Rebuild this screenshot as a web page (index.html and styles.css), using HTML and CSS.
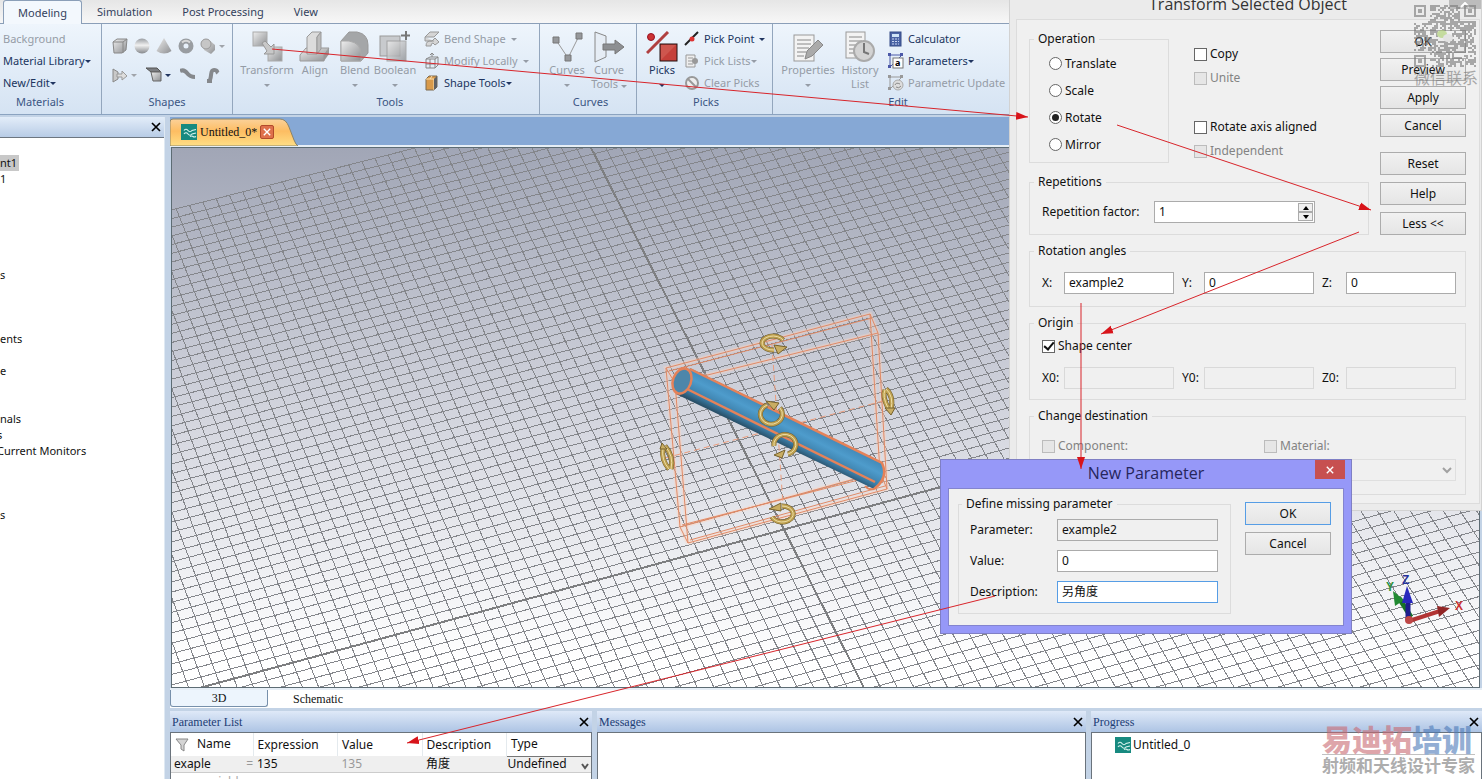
FILE: index.html
```
<!DOCTYPE html>
<html lang="en">
<head>
    <meta charset="UTF-8">
    <meta name="viewport" content="width=device-width, initial-scale=1.0">
    <title>Untitled_0 - Modeling</title>
    <link rel="stylesheet" href="styles.css">
</head>
<body>
    <!-- Shared gradients -->
    <svg class="defs" width="0" height="0">
        <defs>
            <linearGradient id="grey" x1="0" y1="0" x2="1" y2="1">
                <stop offset="0" stop-color="#eeeeee"/><stop offset="1" stop-color="#8d8f92"/>
            </linearGradient>
            <linearGradient id="ball" x1="0" y1="0" x2="0" y2="1">
                <stop offset="0" stop-color="#9a9ea3"/><stop offset="0.45" stop-color="#f0f0f0"/><stop offset="1" stop-color="#85888c"/>
            </linearGradient>
            <linearGradient id="tube" gradientUnits="userSpaceOnUse" x1="784" y1="414" x2="771" y2="440">
                <stop offset="0" stop-color="#4289b8"/><stop offset="0.35" stop-color="#4e9ccc"/><stop offset="0.75" stop-color="#3c7faa"/><stop offset="1" stop-color="#2a5068"/>
            </linearGradient>
            <symbol id="logo" viewBox="0 0 16 16">
                <rect width="16" height="16" fill="#178a80"/>
                <path d="M3 6.500q2-2.500 4 0t4 0l4-1M3 10q2-2.500 4 0t4 0l4-1M9 12.500q2-1 3 0t3 0" fill="none" stroke="#d8f4ee" stroke-width="1.200"/>
            </symbol>
            <symbol id="cross" viewBox="0 0 10 10">
                <path d="M1 1l8 8M9 1L1 9" stroke="currentColor" stroke-width="1.700"/>
            </symbol>
        </defs>
    </svg>

    <nav class="tabs">
        <button class="tab active">Modeling</button>
        <button class="tab">Simulation</button>
        <button class="tab">Post Processing</button>
        <button class="tab">View</button>
    </nav>

    <header class="ribbon">
        <section class="group materials">
            <div class="rows">
                <button class="item" disabled>Background</button>
                <button class="item">Material Library<i class="drop"></i></button>
                <button class="item">New/Edit<i class="drop"></i></button>
            </div>
            <h2>Materials</h2>
        </section>

        <section class="group shapes">
            <div class="shape-row">
                <button aria-label="Brick"><svg width="16" height="16"><path d="M1 4l4-3h10l-1 11-4 3H2z" fill="url(#grey)" stroke="#888"/><path d="M1 4h10v11M11 4l4-3" fill="none" stroke="#888"/></svg></button>
                <button aria-label="Sphere"><svg width="16" height="16"><circle cx="8" cy="8" r="7.500" fill="url(#ball)"/></svg></button>
                <button aria-label="Cone"><svg width="16" height="16"><path d="M8 0l7.500 13q-7.500 5-15 0z" fill="url(#grey)"/></svg></button>
                <button aria-label="Torus"><svg width="16" height="16"><circle cx="8" cy="8" r="5" fill="none" stroke="#999da1" stroke-width="5"/><path d="M4 4.500q4-3.500 8 0" fill="none" stroke="#d8d8d8" stroke-width="2"/></svg></button>
                <button aria-label="Cylinder"><svg width="16" height="16"><path d="M3 2l5-1 7 6v5l-4 4-7-4z" fill="url(#grey)"/><ellipse cx="6" cy="6" rx="5" ry="5" fill="#c6c6c6" stroke="#999"/></svg><i class="drop off"></i></button>
            </div>
            <div class="shape-row second">
                <button aria-label="Extrude"><svg width="16" height="16"><path d="M1 2l5 3v7l-5 3z" fill="#c9c9c9" stroke="#888"/><path d="M5 7h5V4l5 5-5 4v-3H5z" fill="#ddd" stroke="#999"/></svg><i class="drop off"></i></button>
                <button aria-label="Bend sheet"><svg width="16" height="16"><path d="M0 1h11l4 4H5z" fill="#7c7e82" stroke="#555"/><path d="M5 5h10v9H7z" fill="url(#grey)" stroke="#666"/></svg><i class="drop dark"></i></button>
                <button aria-label="Trace"><svg width="16" height="16"><path d="M0 4q4-2 7 2t8 4" fill="none" stroke="#85888c" stroke-width="4"/></svg></button>
                <button aria-label="Wire"><svg width="16" height="16"><path d="M2 14h5M5 13c2-5 0-10 4-10s2 1 4 3" fill="none" stroke="#85888c" stroke-width="4"/></svg></button>
            </div>
            <h2>Shapes</h2>
        </section>

        <section class="group tools">
            <div class="cols">
                <button class="big w52" disabled><svg width="32" height="32"><rect x="2" y="1" width="14" height="14" fill="url(#grey)" stroke="#aaa"/><rect x="17" y="16" width="14" height="14" fill="url(#grey)" stroke="#aaa"/><path d="M11 12l3-2 6 6 3-3v10H13l3-3z" fill="#c8c8c8" stroke="#999"/></svg><span>Transform</span><i class="drop"></i></button>
                <button class="big w44" disabled><svg width="32" height="32"><path d="M1 24l6-7h23l-5 7v6H1z" fill="url(#grey)" stroke="#999"/><path d="M25 24l5-7v6l-5 7z" fill="#999"/><path d="M8 6l5-5h9l-4 5v17H8z" fill="#dcdcdc" stroke="#999"/><path d="M18 6l4-5v17l-4 5z" fill="#bcbcbc" stroke="#999"/></svg><span>Align</span></button>
                <button class="big w36" disabled><svg width="32" height="32"><path d="M2 10l8-9h8q11 2 11 13v8l-7 8H2z" fill="#a4a6a8" stroke="#999"/><path d="M2 10h8q12 2 12 13v7H2z" fill="url(#grey)" stroke="#aaa"/></svg><span>Blend</span><i class="drop"></i></button>
                <button class="big w44" disabled><svg width="32" height="32"><rect x="1" y="5" width="20" height="20" fill="#c8cacd" stroke="#999"/><rect x="8" y="10" width="19" height="20" fill="url(#grey)" stroke="#999" opacity=".8"/><path d="M27 0v9M22 4.500h9" stroke="#777" stroke-width="2"/></svg><span>Boolean</span><i class="drop"></i></button>
                <div class="rows">
                    <button class="item" disabled><svg width="16" height="16"><path d="M1 6l5-5h9l-5 5zM1 6v4h9M2 15q0-6 6-5l3-3 4 4-4 3-2-2q-2 0-2 3z" fill="#d5d5d5" stroke="#999"/></svg>Bend Shape<i class="drop gap"></i></button>
                    <button class="item" disabled><svg width="16" height="16"><path d="M2 6l4-2h8v8l-3 3H2zM2 6h9v9M11 6l3-2M2 11h9M6 6v9M8 4V0M6 2l2-2 2 2" fill="none" stroke="#888"/></svg>Modify Locally<i class="drop gap"></i></button>
                    <button class="item"><svg width="16" height="16"><path d="M2 4l3-3h8v11l-3 3H2z" fill="#d99a4a" stroke="#7c6a50"/><path d="M2 4h8v11M6 4l2-3" fill="none" stroke="#fce0b0"/><path d="M10 4l3-3v11l-3 3z" fill="#5f6165"/></svg>Shape Tools<i class="drop"></i></button>
                </div>
            </div>
            <h2>Tools</h2>
        </section>

        <section class="group curves">
            <div class="cols">
                <button class="big w44" disabled><svg width="32" height="32"><path d="M5 9l12 18L28 5" fill="none" stroke="#999"/><path d="M2 6h6v6H2zM25 2h6v6h-6zM14 24h6v6h-6z" fill="#96989b" stroke="#777"/></svg><span>Curves</span><i class="drop"></i></button>
                <button class="big w40" disabled><svg width="32" height="32"><path d="M2 1l11 4v21L2 31z" fill="#e6edf5" stroke="#888"/><path d="M10 13h12V9l9 7-9 7v-4H10z" fill="#8d8f92" stroke="#777"/></svg><span>Curve<br>Tools <i class="drop"></i></span></button>
            </div>
            <h2>Curves</h2>
        </section>

        <section class="group picks">
            <div class="cols">
                <button class="big w44"><svg width="32" height="32"><circle cx="5" cy="6" r="3.500" fill="#c33" stroke="#912"/><path d="M1 22L22 1" stroke="#b04040" stroke-width="3"/><rect x="14" y="13" width="17" height="17" fill="#c5403a" stroke="#201010"/><path d="M15 29V14h15z" fill="#d3665c" opacity=".6"/></svg><span>Picks</span><i class="drop"></i></button>
                <div class="rows">
                    <button class="item"><svg width="16" height="16"><path d="M1 14L14 1" stroke="#222" stroke-width="2"/><circle cx="8" cy="8" r="2.500" fill="#d33"/></svg>Pick Point<i class="drop gap"></i></button>
                    <button class="item" disabled><svg width="16" height="16"><path d="M2 2h9v12H2zM4 5h5M4 8h5M4 11h5" fill="#eee" stroke="#999"/><circle cx="11" cy="8" r="3" fill="#999"/></svg>Pick Lists<i class="drop"></i></button>
                    <button class="item" disabled><svg width="16" height="16"><circle cx="8" cy="8" r="6" fill="#eee" stroke="#999" stroke-width="2"/><path d="M4 4l8 8" stroke="#999" stroke-width="2"/></svg>Clear Picks</button>
                </div>
            </div>
            <h2>Picks</h2>
        </section>

        <section class="group edit">
            <div class="cols">
                <button class="big w60" disabled><svg width="32" height="32"><rect x="2" y="4" width="20" height="26" fill="#f3f3f3" stroke="#999"/><path d="M5 9h14M5 13h14M5 17h12M5 21h9M5 25h7" stroke="#888"/><path d="M13 28l2-8L26 9l5 5-11 11z" fill="#aaa" stroke="#888"/></svg><span>Properties</span><i class="drop"></i></button>
                <button class="big w44" disabled><svg width="32" height="32"><rect x="2" y="1" width="19" height="26" fill="#f3f3f3" stroke="#999"/><path d="M5 6h13M5 10h13M5 14h7M5 18h5M5 22h5" stroke="#888"/><circle cx="20" cy="20" r="10" fill="#d3d3d3" stroke="#aaa" stroke-width="2"/><path d="M20 12v9l5 2" fill="none" stroke="#777" stroke-width="2"/></svg><span>History<br>List</span></button>
                <div class="rows">
                    <button class="item"><svg width="16" height="16"><rect x="2" y="1" width="11" height="14" fill="#4a63a4" stroke="#354b86"/><path d="M4 3h7v3H4z" fill="#cfe3f6"/><path d="M4 8h7M4 10.500h7M4 13h7" stroke="#c8d4f0" stroke-dasharray="2 1"/></svg>Calculator</button>
                    <button class="item"><svg width="16" height="16"><path d="M2 2h12L2 14z" fill="none" stroke="#4b58a8"/><path d="M0 0h3v3H0zM12 0h3v3h-3zM0 12h3v3H0z" fill="#4b58a8"/><rect x="5" y="5" width="10" height="10" fill="#fff" stroke="#777"/><text x="7" y="13" class="glyph">a</text></svg>Parameters<i class="drop"></i></button>
                    <button class="item" disabled><svg width="16" height="16"><path d="M2 2h12L2 14z" fill="none" stroke="#999"/><path d="M0 0h3v3H0zM12 0h3v3h-3zM0 12h3v3H0z" fill="#999"/><circle cx="10" cy="10" r="5" fill="#ddd" stroke="#aaa"/><path d="M7 10q1-3 5-1M13 11q-2 3-5 1" fill="none" stroke="#888"/></svg>Parametric Update</button>
                </div>
            </div>
            <h2>Edit</h2>
        </section>
    </header>

    <main class="workspace">
        <aside class="tree">
            <div class="tree-head"><button class="close" aria-label="Close"><svg width="10" height="10"><use href="#cross"/></svg></button></div>
            <ul>
                <li><span class="picked">nt1</span></li>
                <li>1</li>
                <li></li><li></li><li></li><li></li><li></li>
                <li>s</li>
                <li></li><li></li><li></li>
                <li>ents</li>
                <li></li>
                <li>e</li>
                <li></li><li></li>
                <li>nals</li>
                <li class="cut">s</li>
                <li class="cut">Current Monitors</li>
                <li></li><li></li><li></li>
                <li>s</li>
            </ul>
        </aside>

        <div class="right">
            <div class="doc-tabs">
                <div class="doc-tab">
                    <svg class="doc-shape" width="128" height="28"><defs><linearGradient id="tabfill" x1="0" y1="0" x2="0" y2="1"><stop offset="0" stop-color="#fbd19a"/><stop offset=".45" stop-color="#fdbd62"/><stop offset="1" stop-color="#ffdf86"/></linearGradient></defs><path d="M0 28V4q0-3 3-3H110q6 0 9 8l5 13q2 5 4 6z" fill="url(#tabfill)" stroke="#8c8468"/></svg>
                    <svg width="16" height="16"><use href="#logo"/></svg>
                    <span>Untitled_0*</span>
                    <button class="doc-close" aria-label="Close document"><svg width="8" height="8"><use href="#cross"/></svg></button>
                </div>
            </div>

            <div class="canvas">
                <svg width="100%" height="100%">
                    <g transform="translate(-172 -148)">
                        <g id="grid"></g>
                        <!-- bounding box of the selection -->
                        <g class="box-glow">
                            <path d="M666 368L870 314L878 333L675 383zM666 368L680 527L688 543L675 383M680 527L880 472L870 314M688 543L887 489L878 333M880 472L887 489"/>
                        </g>
                        <g class="box">
                            <path d="M666 368L870 314L878 333L675 383zM666 368L680 527L688 543L675 383M680 527L880 472L870 314M688 543L887 489L878 333M880 472L887 489"/>
                            <path d="M669 371L872 318M682 525L878 475M690 540L885 486"/>
                        </g>
                        <path class="dash" d="M772 345L783 505M665 458L887 400"/>
                        <!-- cylinder -->
                        <path d="M690 368L882 463Q888 478 874 489L676 394z" fill="url(#tube)"/>
                        <ellipse cx="682" cy="381" rx="9" ry="13" transform="rotate(20 682 381)" fill="#4d86aa" stroke="#e58259" stroke-width="2.500"/>
                        <path d="M690 369L882 463Q889 478 874 489M687 389L875 482" fill="none" stroke="#e58259" stroke-width="2.500"/>
                        <path d="M874 489q-6 1-9-3" fill="none" stroke="#e58259" stroke-width="2"/>
                        <!-- rotation handles -->
                        <g id="rings">
                            <path d="M783 340A11 7 0 1 0 774 350"/>
                            <path d="M780 408A11 10 0 1 1 767 405"/>
                            <path d="M774 446A11 10 0 1 1 788 454"/>
                            <path d="M772 517A11 8 0 1 0 782 506"/>
                            <path d="M885 390Q882 396 888 408M886 389Q894 396 891 410"/>
                            <path d="M663 448Q661 460 669 469M665 446Q674 456 671 469"/>
                        </g>
                        <g class="tips">
                            <path d="M774 345l13 2-9 7zM766 401l13 2-5 7zM774 455l11-5-3 8zM769 509l12-6v8zM885 408l10 0-4 7zM660 449l2-6 5 6z"/>
                        </g>
                        <!-- coordinate axes -->
                        <path d="M1411 617L1399 598" stroke="#177326" stroke-width="5"/>
                        <path d="M1393 591l11 9-9 6z" fill="#218a32"/>
                        <path d="M1408 620V600" stroke="#1d1d8d" stroke-width="5"/>
                        <path d="M1402 603l5-17 6 17z" fill="#2828bd"/>
                        <path d="M1409 621L1440 611" stroke="#b23434" stroke-width="4"/>
                        <path d="M1437 606l13 2-11 9z" fill="#912525"/>
                        <circle cx="1409" cy="620" r="4" fill="#bd4646"/>
                        <g class="axis-text">
                            <text x="1402" y="584" fill="#26329a">Z</text>
                            <text x="1386" y="591" fill="#2c9440">Y</text>
                            <text x="1455" y="610" fill="#cc3232">X</text>
                        </g>
                    </g>
                </svg>
            </div>

            <div class="view-tabs">
                <button class="view-tab on">3D</button>
                <button class="view-tab">Schematic</button>
            </div>

            <div class="docks">
                <section class="dock params">
                    <h3>Parameter List<button class="close" aria-label="Close"><svg width="10" height="10"><use href="#cross"/></svg></button></h3>
                    <div class="dock-body">
                        <table>
                            <thead>
                                <tr>
                                    <th><svg width="14" height="14"><path d="M1 1h12L9 7v6l-3-2V7z" fill="#d5d5d5" stroke="#888"/></svg>Name</th>
                                    <th>Expression</th><th>Value</th><th>Description</th><th>Type</th>
                                </tr>
                            </thead>
                            <tbody>
                                <tr><td>exaple<span class="eq">=</span></td><td>135</td><td class="dim">135</td><td>角度</td><td class="type">Undefined<svg width="8" height="8"><path d="M1 2l3 4 3-4" fill="none" stroke="#555" stroke-width="2"/></svg></td></tr>
                                <tr class="new"><td colspan="5">new variable</td></tr>
                            </tbody>
                        </table>
                    </div>
                </section>
                <section class="dock messages">
                    <h3>Messages<button class="close" aria-label="Close"><svg width="10" height="10"><use href="#cross"/></svg></button></h3>
                    <div class="dock-body"></div>
                </section>
                <section class="dock progress">
                    <h3>Progress<button class="close" aria-label="Close"><svg width="10" height="10"><use href="#cross"/></svg></button></h3>
                    <div class="dock-body"><p><svg width="16" height="16"><use href="#logo"/></svg>Untitled_0</p></div>
                </section>
            </div>
        </div>
    </main>

    <!-- Transform dialog -->
    <form class="dialog transform">
        <h1>Transform Selected Object</h1>
        <button type="button" class="corner" aria-label="Close"><svg width="12" height="6"><path d="M2 5l4-4 4 4" fill="none" stroke="#fff" stroke-width="2"/></svg></button>
        <div class="frame">
            <div class="top">
                <div class="left">
                    <div class="options">
                        <fieldset class="operation">
                            <legend>Operation</legend>
                            <label><input type="radio" name="op">Translate</label>
                            <label><input type="radio" name="op">Scale</label>
                            <label><input type="radio" name="op" checked>Rotate</label>
                            <label><input type="radio" name="op">Mirror</label>
                        </fieldset>
                        <div class="checks">
                            <label><input type="checkbox">Copy</label>
                            <label class="off"><input type="checkbox" disabled>Unite</label>
                            <label class="apart"><input type="checkbox">Rotate axis aligned</label>
                            <label class="off"><input type="checkbox" disabled>Independent</label>
                        </div>
                    </div>
                    <fieldset class="repetitions">
                        <legend>Repetitions</legend>
                        <div class="factor">
                            <label for="factor">Repetition factor:</label>
                            <div class="spin">
                                <input type="text" id="factor" value="1">
                                <div class="arrows">
                                    <button type="button" aria-label="Up"><svg width="6" height="4"><path d="M0 4l3-4 3 4z"/></svg></button>
                                    <button type="button" aria-label="Down"><svg width="6" height="4"><path d="M0 0l3 4 3-4z"/></svg></button>
                                </div>
                            </div>
                        </div>
                    </fieldset>
                </div>
                <div class="buttons">
                    <button type="button">OK</button>
                    <button type="button">Preview</button>
                    <button type="button">Apply</button>
                    <button type="button">Cancel</button>
                    <div class="buttons more">
                        <button type="button">Reset</button>
                        <button type="button">Help</button>
                        <button type="button">Less &lt;&lt;</button>
                    </div>
                </div>
            </div>
            <fieldset class="angles">
                <legend>Rotation angles</legend>
                <div class="triple">
                    <label for="ax">X:</label><input type="text" id="ax" value="example2">
                    <label for="ay">Y:</label><input type="text" id="ay" value="0">
                    <label for="az">Z:</label><input type="text" id="az" value="0">
                </div>
            </fieldset>
            <fieldset class="origin">
                <legend>Origin</legend>
                <label class="check"><input type="checkbox" checked>Shape center</label>
                <div class="triple">
                    <label for="ox">X0:</label><input type="text" id="ox" disabled>
                    <label for="oy">Y0:</label><input type="text" id="oy" disabled>
                    <label for="oz">Z0:</label><input type="text" id="oz" disabled>
                </div>
            </fieldset>
            <fieldset class="destination">
                <legend>Change destination</legend>
                <div class="pair">
                    <div>
                        <label class="check off"><input type="checkbox" disabled>Component:</label>
                        <select disabled aria-label="Component"><option></option></select>
                    </div>
                    <div>
                        <label class="check off"><input type="checkbox" disabled>Material:</label>
                        <select disabled aria-label="Material"><option></option></select>
                    </div>
                </div>
            </fieldset>
        </div>
    </form>

    <!-- New parameter dialog -->
    <form class="dialog parameter">
        <h1>New Parameter</h1>
        <button type="button" class="red-close" aria-label="Close"><svg width="8" height="8"><use href="#cross"/></svg></button>
        <div class="param-body">
            <fieldset>
                <legend>Define missing parameter</legend>
                <div class="field"><label for="pname">Parameter:</label><input type="text" id="pname" value="example2" readonly></div>
                <div class="field"><label for="pvalue">Value:</label><input type="text" id="pvalue" value="0"></div>
                <div class="field"><label for="pdesc">Description:</label><input type="text" id="pdesc" value="另角度" class="focus"></div>
            </fieldset>
            <div class="buttons more">
                <button type="button" class="default">OK</button>
                <button type="button">Cancel</button>
            </div>
        </div>
    </form>

    <div class="qr">
        <svg id="qr" width="64" height="64"></svg>
        <span>微信联系</span>
    </div>
    <div class="brand">
        <strong>易迪拓<em>培训</em></strong>
        <span>射频和天线设计专家</span>
    </div>

    <!-- Step arrows -->
    <svg class="notes" width="100%" height="100%">
        <defs><marker id="tip" markerUnits="userSpaceOnUse" markerWidth="13" markerHeight="10" refX="12" refY="5" orient="auto"><path d="M0 1l12 4-12 4z" fill="#d8141a"/></marker></defs>
        <path d="M272 49L1028 117"/>
        <path d="M1117 125L1371 210"/>
        <path d="M1359 232L1101 334"/>
        <path d="M1081 303V469"/>
        <path d="M995 596L407 743"/>
    </svg>

    <script src="script.js"></script>
</body>
</html>
```
FILE: script.js
```
// Working plane grid, u runs to the right and v towards the viewer
function project(u, v) {
    const w = 1 + 0.0005 * u - 0.002 * v;
    return [
        (784 + (14.2 * u + 4.6 * v) / w).toFixed(1),
        (529.5 + (-3.85 * u + 9.1 * v) / w).toFixed(1)
    ];
}

function gridLine(from, to, axis) {
    return `<path class="${axis ? 'axis' : 'line'}" d="M${project(...from)}L${project(...to)}"/>`;
}

let lines = '';
for (let u = -80; u <= 80; u++) {
    lines += gridLine([u, -51], [u, 70], u === 0);
}
for (let v = -51; v <= 70; v++) {
    lines += gridLine([-80, v], [80, v], v === 0);
}
document.getElementById('grid').innerHTML = lines;

// Every ring is a dark outline, a gold body and a thin highlight
const rings = document.getElementById('rings');
const arcs = rings.innerHTML;
rings.innerHTML = `<g class="ring dark">${arcs}</g><g class="ring body">${arcs}</g><g class="ring shine">${arcs}</g>`;

// QR code modules
const n = 31;
let seed = 7;
let cells = '';
function inFinder(x, y) {
    return (x < 8 && y < 8) || (x > n - 9 && y < 8) || (x < 8 && y > n - 9);
}
for (let y = 0; y < n; y++) {
    for (let x = 0; x < n; x++) {
        seed = (seed * 16807) % 2147483647;
        const centre = Math.abs(x - 15) < 4 && Math.abs(y - 15) < 3;
        if (!inFinder(x, y) && !centre && seed / 2147483647 > 0.42) {
            cells += `<rect x="${x * 2}" y="${y * 2}" width="2" height="2"/>`;
        }
    }
}
[[0, 0], [50, 0], [0, 50]].forEach(([x, y]) => {
    cells += `<path d="M${x} ${y}h12v12h-12zM${x + 2} ${y + 2}v8h8v-8z" fill-rule="evenodd"/><rect x="${x + 4}" y="${y + 4}" width="4" height="4"/>`;
});
cells += '<ellipse cx="28" cy="29" rx="5" ry="4" fill="#a9cf6a"/><ellipse cx="34" cy="33" rx="5" ry="4" fill="#ddd"/>';
document.getElementById('qr').innerHTML = cells;
```
FILE: styles.css
```
* {
    box-sizing: border-box;
}
body {
    margin: 0;
    height: 100vh;
    display: flex;
    flex-direction: column;
    position: relative;
    overflow: hidden;
    background-color: #c3d3e6;
    font-family: 'Noto Sans', 'Noto Sans CJK SC', sans-serif;
    font-size: 12px;
    line-height: 14px;
    color: #111;
}
button {
    font: inherit;
    color: inherit;
    background: none;
    border: none;
    padding: 0;
}
h1, h2, h3, p, ul, fieldset {
    margin: 0;
    padding: 0;
    font-weight: normal;
}
.defs {
    position: absolute;
}

/* Ribbon */
.tabs {
    display: flex;
    height: 24px;
    padding-left: 3px;
    background: linear-gradient(#e6e6e6, #f7f7f7);
    border-bottom: 1px solid #8b9fb8;
    font-size: 11px;
    color: #33415c;
}
.tab {
    height: 24px;
    padding: 0 15px;
}
.tab.active {
    width: 79px;
    padding: 0;
    border: 1px solid #8b9fb8;
    border-bottom: none;
    border-radius: 3px 3px 0 0;
    background-color: #f3f8fd;
}
.ribbon {
    display: flex;
    height: 91px;
    background: linear-gradient(#eef5fc, #d5e3f3);
    border-bottom: 1px solid #8ba3c0;
    font-size: 11px;
    color: #203560;
}
.group {
    display: flex;
    flex-direction: column;
    flex: none;
    height: 90px;
    padding-top: 4px;
    border-right: 1px solid #93a6bd;
}
.group h2 {
    margin-top: auto;
    height: 20px;
    font-size: 11px;
    line-height: 16px;
    text-align: center;
    color: #3b5583;
}
.materials {
    width: 102px;
    padding-left: 3px;
}
.materials h2 {
    padding-right: 24px;
}
.shapes {
    width: 131px;
}
.tools {
    width: 307px;
    padding-left: 8px;
}
.curves {
    width: 97px;
    padding-left: 5px;
}
.picks {
    width: 136px;
    padding-left: 3px;
}
.edit {
    width: 246px;
    padding-left: 5px;
}
.cols {
    display: flex;
}
.rows {
    display: flex;
    flex-direction: column;
    align-items: flex-start;
}
.tools .rows {
    margin-left: 7px;
}
.edit .rows {
    margin-left: 6px;
}
.item {
    display: flex;
    align-items: center;
    height: 22px;
    white-space: nowrap;
}
.item svg {
    margin-right: 4px;
}
button:disabled {
    color: #959ca6;
}
.drop {
    display: inline-block;
    border: 3px solid transparent;
    border-top-color: currentColor;
    border-bottom: none;
}
.drop.gap {
    margin-left: 5px;
}
.drop.off {
    color: #a0a4aa;
    margin-left: 3px;
}
.drop.dark {
    margin-left: 3px;
}
.big {
    display: flex;
    flex-direction: column;
    align-items: center;
    height: 66px;
    padding-top: 3px;
}
.big svg {
    flex: none;
}
.big > .drop {
    margin-top: 7px;
}
.w36 {
    width: 36px;
}
.w40 {
    width: 40px;
}
.w44 {
    width: 44px;
}
.w52 {
    width: 52px;
}
.w60 {
    width: 60px;
}
.shape-row {
    display: flex;
    gap: 6px;
    height: 28px;
    padding: 8px 0 0 10px;
}
.shape-row button {
    display: flex;
    align-items: center;
    height: 20px;
}
.shape-row.second {
    gap: 9px;
    padding-top: 9px;
}
.glyph {
    font: bold 9px 'Noto Sans', sans-serif;
}

/* Navigation tree */
.workspace {
    flex: 1;
    display: flex;
    gap: 5px;
    min-height: 0;
    padding-top: 2px;
}
.tree {
    width: 165px;
    background-color: #fff;
    border-right: 1px solid #dfe9f3;
    font-size: 11px;
    overflow: hidden;
}
.tree-head {
    display: flex;
    align-items: center;
    justify-content: flex-end;
    height: 21px;
    padding-right: 3px;
    background: linear-gradient(#e3edf9, #b8cce6);
    border-bottom: 1px solid #6d7680;
}
.close {
    display: flex;
    color: #000;
}
.tree ul {
    list-style: none;
    padding-top: 17px;
}
.tree li {
    height: 16px;
    line-height: 16px;
}
.picked {
    display: inline-block;
    padding-right: 2px;
    background-color: #c8c8c8;
}
.cut {
    margin-left: -3px;
}

/* Document area */
.right {
    flex: 1;
    display: flex;
    flex-direction: column;
    min-width: 0;
}
.doc-tabs {
    height: 30px;
    padding-top: 1px;
    background-color: #86a8d5;
    border-bottom: 2px solid #e6eef6;
}
.doc-tab {
    position: relative;
    display: flex;
    align-items: center;
    width: 128px;
    height: 27px;
    padding-left: 11px;
    font-family: 'Liberation Serif', serif;
    font-size: 12px;
}
.doc-tab > * {
    position: relative;
}
.doc-tab .doc-shape {
    position: absolute;
    left: 0;
    top: 0;
}
.doc-tab span {
    width: 63px;
    padding-left: 3px;
}
.doc-close {
    display: flex;
    align-items: center;
    justify-content: center;
    width: 14px;
    height: 14px;
    border: 1px solid #b24a2c;
    border-radius: 2px;
    background-color: #df704b;
    color: #fff;
}
.canvas {
    flex: 1;
    min-height: 0;
    margin: 0 2px 0 1px;
    border: 1px solid #5d6c74;
    background: linear-gradient(#a1a6b6, #d3d5de 50%, #ffffff 95%);
    overflow: hidden;
}
.canvas svg {
    display: block;
}
#grid {
    shape-rendering: crispEdges;
}
.line {
    stroke: #84868b;
    stroke-width: 1;
}
.axis {
    stroke: #7d7e80;
    stroke-width: 2;
}
.box-glow path {
    fill: none;
    stroke: #ffd2bc;
    stroke-width: 4;
    opacity: 0.4;
}
.box path {
    fill: none;
    stroke: #e08a66;
}
.dash {
    fill: none;
    stroke: #eb9c7c;
    stroke-dasharray: 6 4;
}
.ring path {
    fill: none;
}
.ring.dark path {
    stroke: #6f5d2c;
    stroke-width: 5;
}
.ring.body path {
    stroke: #bd9f50;
    stroke-width: 4;
}
.ring.shine path {
    stroke: #efe0a6;
    stroke-width: 1;
}
.tips path {
    fill: #c9ad62;
    stroke: #75602a;
}
.axis-text {
    font: bold 12px 'Liberation Sans', sans-serif;
}
.view-tabs {
    display: flex;
    height: 20px;
    border-top: 2px solid #e6eef6;
    background-color: #fff;
    font-family: 'Liberation Serif', serif;
}
.view-tab {
    width: 100px;
    height: 17px;
}
.view-tab.on {
    width: 98px;
    border: 1px solid #7790ab;
    border-top: none;
    border-radius: 0 0 3px 3px;
    background-color: #edf5fd;
}

/* Docked panels */
.docks {
    display: grid;
    grid-template-columns: 422fr 489fr 391fr;
    gap: 5px;
    height: 71px;
    padding-top: 3px;
    background-color: #c3d3e6;
}
.dock {
    display: flex;
    flex-direction: column;
    min-width: 0;
}
.dock h3 {
    display: flex;
    align-items: center;
    justify-content: space-between;
    height: 21px;
    padding: 0 3px 0 2px;
    background: linear-gradient(#dfe9f8, #adc4e4);
    font-family: 'Liberation Serif', serif;
    font-size: 12px;
    color: #1c3c74;
}
.dock-body {
    flex: 1;
    min-height: 0;
    overflow: hidden;
    background-color: #fff;
    border: 1px solid #6a737c;
    border-bottom: none;
}
.progress p {
    display: flex;
    align-items: center;
    gap: 2px;
    padding: 4px 0 0 23px;
}
table {
    width: 100%;
    table-layout: fixed;
    border-collapse: collapse;
    text-align: left;
}
th {
    height: 23px;
    padding: 0 0 0 4px;
    font-weight: normal;
    border-left: 1px solid #e4eaee;
}
th:first-child {
    width: 82px;
    border-left: none;
}
th svg {
    margin-right: 8px;
    vertical-align: middle;
}
td {
    height: 16px;
    padding: 0 4px;
    background-color: #efefef;
    border-bottom: 1px solid #ccc;
}
td:first-child {
    padding: 0 0 0 3px;
}
.eq {
    float: right;
    color: #999;
}
.dim {
    color: #999;
}
.type {
    padding: 0 2px 0 1px;
    border-top: 1px solid #777;
}
.type svg {
    float: right;
    margin-top: 5px;
}
.new td {
    padding: 2px 0 0 3px;
    background-color: #fff;
    color: #aaa;
}

/* Dialogs */
.dialog {
    position: absolute;
    background-color: #f0f0f0;
}
.dialog h1 {
    font-family: 'Open Sans', 'Noto Sans', sans-serif;
    font-size: 16px;
    line-height: 20px;
    text-align: center;
    color: #333;
}
.transform {
    top: 0;
    right: 0;
    width: 473px;
    height: 511px;
    background-color: #ebebeb;
    border: 1px solid #d2d2d2;
    border-top: none;
    padding: 0 1px 0 6px;
}
.transform h1 {
    margin-top: -6px;
    height: 25px;
}
.corner {
    position: absolute;
    right: 0;
    top: 0;
    width: 32px;
    height: 9px;
    background-color: #bcbcbc;
}
.corner svg {
    display: block;
    margin: 0 auto;
}
.frame {
    display: flex;
    flex-direction: column;
    gap: 9px;
    height: 485px;
    padding: 10px 13px 0 12px;
    border: 1px solid #dcdcdc;
    background-color: #f0f0f0;
}
fieldset {
    border: 1px solid #dcdcdc;
    min-width: 0;
}
legend {
    margin-left: -8px;
    padding: 0 4px;
    line-height: 14px;
}
.top {
    display: flex;
    gap: 11px;
}
.left {
    flex: 1;
    padding-top: 2px;
}
.options {
    display: flex;
    gap: 25px;
    margin-bottom: 12px;
}
.operation {
    width: 140px;
    padding: 4px 0 2px 19px;
}
.operation legend {
    margin-left: -15px;
}
.operation label, .checks label, .check {
    display: flex;
    align-items: center;
}
.operation label {
    height: 27px;
}
.checks {
    padding-top: 10px;
}
.checks label {
    height: 24px;
}
.checks .apart {
    margin-top: 25px;
}
.off {
    color: #838383;
}
input[type="radio"], input[type="checkbox"] {
    appearance: none;
    display: flex;
    align-items: center;
    justify-content: center;
    width: 13px;
    height: 13px;
    margin: 0 3px 0 0;
    border: 1px solid #666;
    background-color: #fff;
}
input[type="radio"] {
    border-radius: 50%;
}
input[type="radio"]:checked::before {
    content: '';
    width: 7px;
    height: 7px;
    border-radius: 50%;
    background-color: #222;
}
input[type="checkbox"]:checked::before {
    content: '';
    width: 4px;
    height: 8px;
    margin-bottom: 2px;
    border: solid #111;
    border-width: 0 2px 2px 0;
    transform: rotate(40deg);
}
input[type="checkbox"]:disabled {
    border-color: #bcbcbc;
    background-color: #e6e6e6;
}
input[type="text"] {
    width: 100%;
    height: 22px;
    padding: 0 4px 2px;
    border: 1px solid #ababab;
    background-color: #fff;
    font: inherit;
    color: #111;
}
input[type="text"]:read-only {
    background-color: #f0f0f0;
}
input[type="text"]:disabled {
    border-color: #d9d9d9;
    background-color: #f0f0f0;
}
input[type="text"].focus {
    border-color: #569de5;
}
.repetitions {
    padding: 12px 0 11px 12px;
}
.factor {
    display: flex;
    align-items: center;
}
.factor label {
    width: 112px;
}
.spin {
    display: flex;
    width: 161px;
    height: 22px;
    border: 1px solid #ababab;
    background-color: #fff;
}
.spin input[type="text"] {
    flex: 1;
    min-width: 0;
    height: 20px;
    border: none;
}
.arrows {
    display: flex;
    flex-direction: column;
    justify-content: space-between;
    padding: 1px;
}
.arrows button {
    display: flex;
    align-items: center;
    justify-content: center;
    width: 15px;
    height: 9px;
    border: 1px solid #ababab;
    background-color: #f0f0f0;
}
.buttons {
    display: flex;
    flex-direction: column;
    gap: 5px;
    width: 86px;
}
.buttons.more {
    gap: 7px;
}
.buttons .more {
    margin-top: 10px;
}
.buttons button {
    height: 23px;
    border: 1px solid #acacac;
    background: linear-gradient(#f1f1f1, #e5e5e5);
}
.buttons .default {
    border-color: #569de5;
}
.triple {
    display: grid;
    grid-template-columns: 22px 1fr 30px 1fr 32px 1fr;
    align-items: center;
}
.triple label {
    white-space: nowrap;
}
.triple input + label {
    padding-left: 8px;
}
.angles {
    padding: 14px 9px 12px 12px;
}
.origin {
    padding: 6px 9px 10px 12px;
}
.check {
    height: 20px;
}
.origin .triple {
    margin-top: 11px;
}
.destination {
    padding: 13px 9px 13px 12px;
}
.pair {
    display: grid;
    grid-template-columns: 1fr 1fr;
    gap: 30px;
}
select {
    width: 100%;
    height: 22px;
    margin-top: 3px;
    border: 1px solid #d9d9d9;
    background-color: #f0f0f0;
}

/* New parameter */
.parameter {
    top: 459px;
    right: 130px;
    width: 412px;
    padding: 0 7px 7px;
    border: 1px solid #7f7fc4;
    background-color: #9698f8;
}
.parameter h1 {
    height: 28px;
    line-height: 27px;
    color: #26265c;
}
.red-close {
    position: absolute;
    top: 0;
    right: 6px;
    display: flex;
    align-items: center;
    justify-content: center;
    width: 30px;
    height: 19px;
    background-color: #c75050;
    color: #fff;
}
.param-body {
    display: flex;
    gap: 14px;
    padding: 8px 12px 11px 9px;
    border: 1px solid #8384cf;
    background-color: #f0f0f0;
}
.param-body fieldset {
    flex: 1;
    padding: 8px 12px 10px 11px;
}
.param-body .buttons {
    padding-top: 5px;
}
.field {
    display: flex;
    align-items: center;
}
.field + .field {
    margin-top: 9px;
}
.field label {
    flex: none;
    width: 87px;
}

/* Overlays */
.qr {
    position: absolute;
    top: 5px;
    right: 4px;
    width: 64px;
    color: #777;
    opacity: 0.6;
    font-size: 16px;
    line-height: 18px;
    fill: #777;
}
.qr svg {
    display: block;
}
.qr span {
    white-space: nowrap;
}
.brand {
    position: absolute;
    right: 7px;
    bottom: 4px;
    display: flex;
    flex-direction: column;
    font-family: 'Noto Sans CJK SC', sans-serif;
    white-space: nowrap;
    opacity: 0.6;
}
.brand strong {
    font-size: 30px;
    font-weight: 900;
    line-height: 32px;
    color: #c96a72;
    border-bottom: 1px solid #999;
}
.brand em {
    font-style: normal;
    color: #4c7ab8;
}
.brand span {
    font-size: 17px;
    font-weight: bold;
    line-height: 20px;
    color: #777;
}
.notes {
    position: absolute;
    inset: 0;
    pointer-events: none;
}
.notes > path {
    fill: none;
    stroke: #d8242a;
    stroke-width: 1;
    marker-end: url(#tip);
}
```
